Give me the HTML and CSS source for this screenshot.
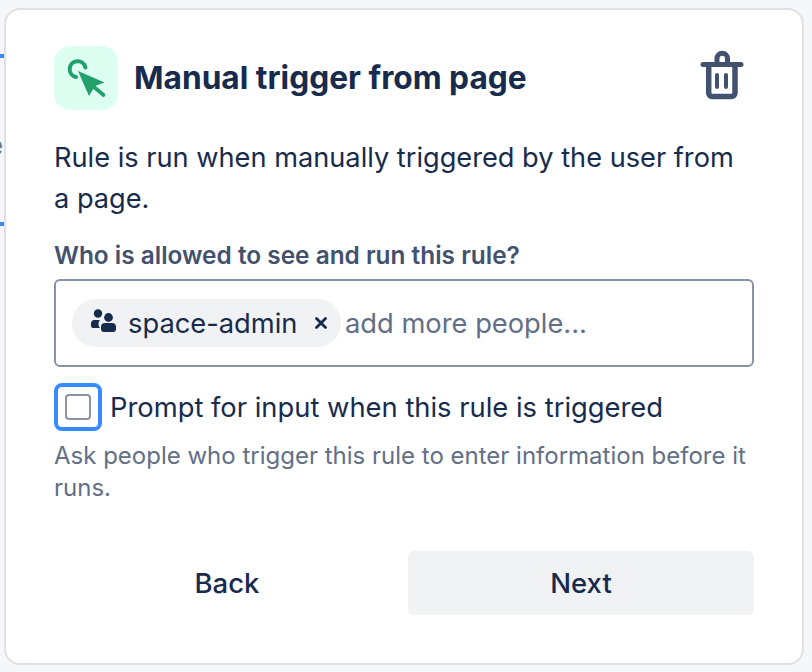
FILE: index.html
```html
<!DOCTYPE html>
<html lang="en">
<head>
<meta charset="utf-8">
<title>Manual trigger from page</title>
<link rel="stylesheet" href="styles.css">
</head>
<body>
<div class="peek peek-top"></div>
<div class="peek peek-glyph">e</div>
<div class="peek peek-bottom"></div>
<main class="card">
  <header class="head">
    <div class="badge">
      <svg width="64" height="64" viewBox="0 0 64 64" fill="none">
        <path d="M22 31 A8 8 0 1 1 31.5 21.5" stroke="#22a06b" stroke-width="4" stroke-linecap="round"/>
        <path d="M24 25 L50.5 36.5 L41 40 L35 50 Z" fill="#22a06b"/>
        <path d="M40 41 L49.5 49" stroke="#22a06b" stroke-width="3.6" stroke-linecap="round"/>
      </svg>
    </div>
    <h1 class="title">Manual trigger from page</h1>
    <svg class="trash" width="44" height="50" viewBox="0 0 44 50" fill="none" stroke="#42526e">
      <path d="M3 14.5 H41" stroke-width="5" stroke-linecap="round"/>
      <path d="M17 14 V8.5 A5 5 0 0 1 27.5 8.5 V14" stroke-width="5"/>
      <path d="M8.7 15 V43 A3.5 3.5 0 0 0 12.2 46.5 H31.5 A3.5 3.5 0 0 0 35 43 V15" stroke-width="5.5"/>
      <path d="M17 25 V37 M26 25 V37" stroke-width="4" stroke-linecap="round"/>
    </svg>
  </header>
  <p class="desc">Rule is run when manually triggered by the user from a page.</p>
  <label class="field-label">Who is allowed to see and run this rule?</label>
  <div class="picker">
    <span class="chip">
      <svg class="people" width="26" height="26" viewBox="0 0 26 26" fill="#172b4d">
        <circle cx="8" cy="5.5" r="4.2"/>
        <circle cx="18.5" cy="9.5" r="4.4"/>
        <path d="M1 15.5 A3.5 3.5 0 0 1 4.5 12 H10 A6 6 0 0 0 10 20 H3 A2 2 0 0 1 1 18 Z"/>
        <path d="M11 19 A4 4 0 0 1 15 15 H22 A4 4 0 0 1 26 19 V21 A3 3 0 0 1 23 24 H14 A3 3 0 0 1 11 21 Z"/>
      </svg>
      <span class="chip-text">space-admin</span>
      <svg class="chip-x" width="12" height="12" viewBox="0 0 12 12" stroke="#172b4d" stroke-width="2.8" stroke-linecap="round">
        <path d="M1.5 1.5 L10.5 10.5 M10.5 1.5 L1.5 10.5"/>
      </svg>
    </span>
    <span class="placeholder">add more people...</span>
  </div>
  <div class="check-row">
    <span class="focus-ring"><span class="box"></span></span>
    <span class="check-label">Prompt for input when this rule is triggered</span>
  </div>
  <p class="help">Ask people who trigger this rule to enter information before it runs.</p>
  <div class="actions">
    <button class="btn" type="button">Back</button>
    <button class="btn btn-next" type="button">Next</button>
  </div>
</main>
</body>
</html>
```
FILE: styles.css
```css
* { box-sizing: border-box; }
html, body { margin: 0; height: 672px; overflow: hidden; }
body {
  background: #f6f7f9;
  font-family: Inter, "Liberation Sans", sans-serif;
  color: #172b4d;
  padding: 8px 8px 7px 4px;
  position: relative;
}
.peek { position: absolute; left: 0; }
.peek-top, .peek-bottom { width: 4px; height: 4px; background: #388bff; }
.peek-top { top: 54px; }
.peek-bottom { top: 222px; }
.peek-glyph { top: 130px; left: -12px; font-size: 26px; color: #6b778c; }
.card {
  width: 800px;
  height: 657px;
  background: #fff;
  border: 2px solid #dfe1e6;
  border-radius: 16px;
  padding: 36px 48px 0;
  position: relative;
}
.head { display: flex; align-items: center; gap: 16px; }
.badge {
  width: 64px; height: 64px;
  background: #dcfff1;
  border-radius: 16px;
  display: flex;
}
.title { margin: 0; flex: 1; font-size: 31.7px; font-weight: 700; line-height: 40px; }
.trash { margin: -6px 10px 0 0; }
.desc { margin: 27px 0 0; font-size: 27.2px; line-height: 41px; }
.field-label { display: block; margin-top: 20px; font-size: 24.4px; font-weight: 600; line-height: 32px; color: #42526e; }
.picker {
  margin-top: 8px;
  height: 88px;
  border: 2px solid #8993a4;
  border-radius: 6px;
  display: flex; align-items: center;
  padding: 0 16px;
  gap: 4px;
}
.chip {
  height: 48px;
  width: 269px;
  flex: none;
  background: #f1f2f4;
  border-radius: 24px;
  display: flex; align-items: center;
  padding: 0 14px 0 18px;
}
.people { margin-right: 12px; margin-top: -4px; flex: none; }
.chip-text { font-size: 27.3px; flex: 1; }
.chip-x { margin-top: -1px; flex: none; }
.placeholder { font-size: 27.3px; color: #626f86; }
.check-row { display: flex; align-items: center; gap: 8px; margin-top: 16px; }
.focus-ring {
  width: 48px; height: 48px;
  border: 4px solid #388bff;
  border-radius: 8px;
  display: flex; align-items: center; justify-content: center;
}
.box { width: 26px; height: 26px; border: 2px solid #8993a4; border-radius: 4px; background: #fff; }
.check-label { font-size: 27.35px; }
.help { margin: 9px 0 0; font-size: 24px; line-height: 32px; color: #626f86; }
.actions { display: flex; gap: 8px; margin-top: 47px; justify-content: flex-end; }
.btn {
  flex: 1;
  height: 64px;
  border: 0;
  border-radius: 6px;
  background: transparent;
  font: 500 27.5px Inter, "Liberation Sans", sans-serif;
  color: #172b4d;
}
.btn-next { background: #f1f2f4; }
```
